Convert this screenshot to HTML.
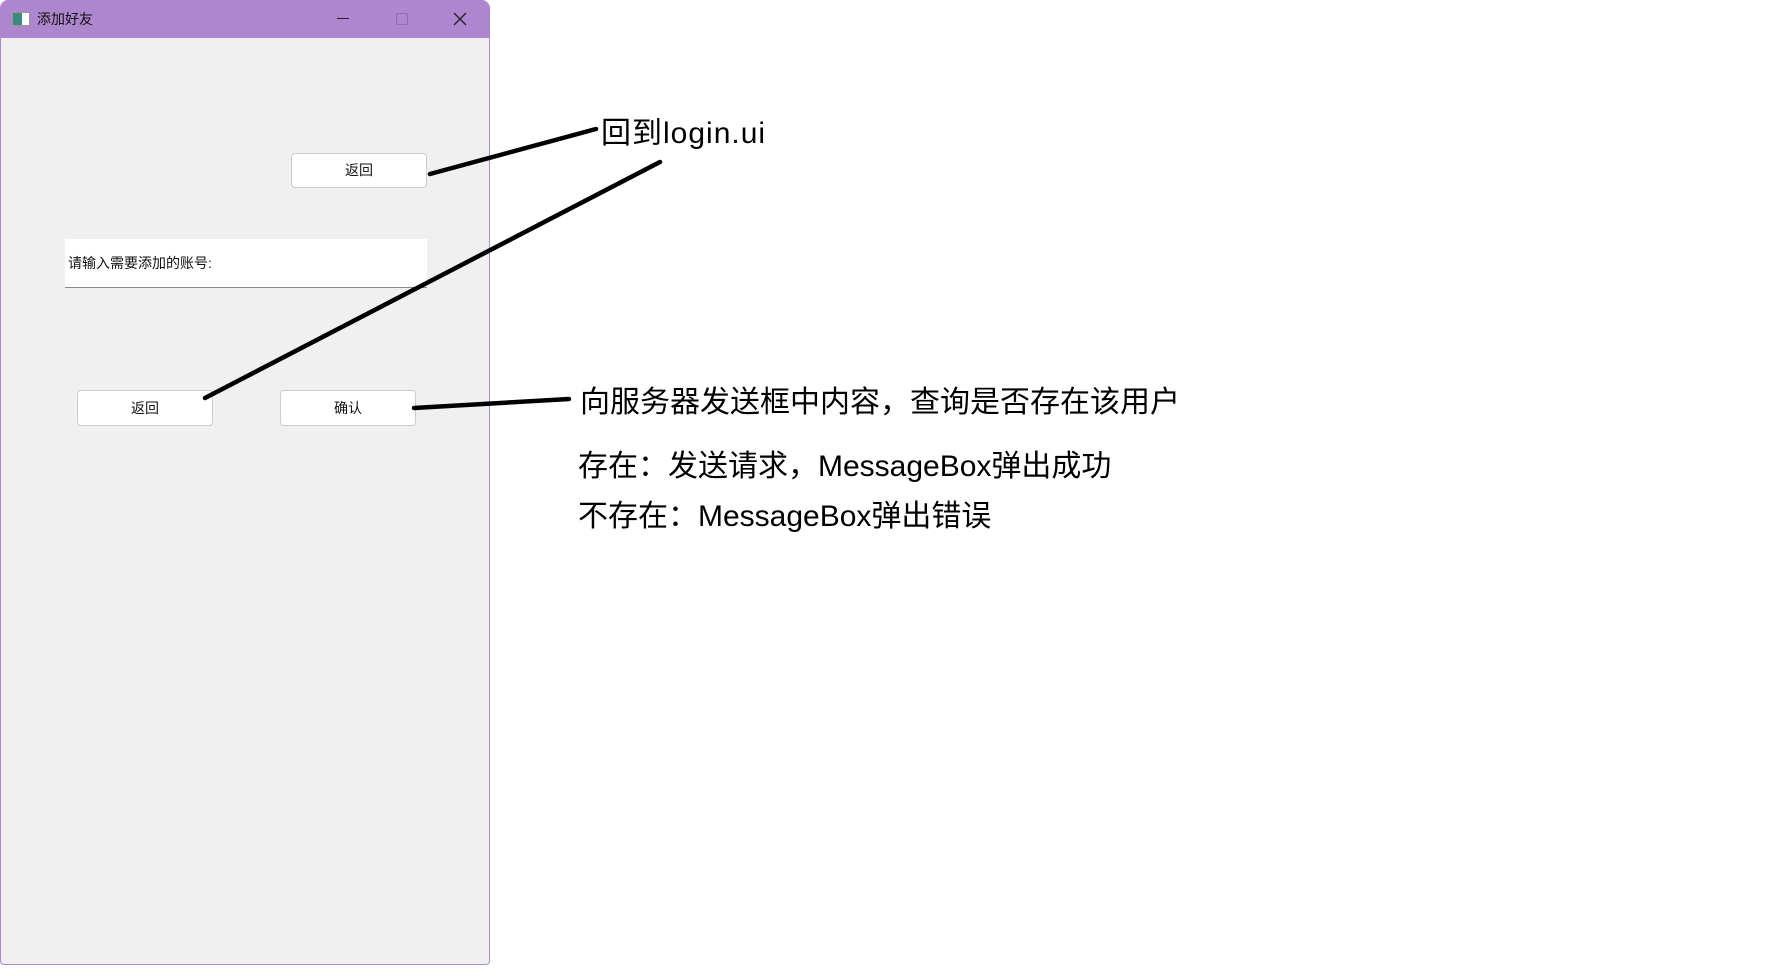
<!DOCTYPE html>
<html><head><meta charset="utf-8"><style>
body{margin:0;width:1775px;height:977px;background:#fff;position:relative;overflow:hidden;font-family:"Liberation Sans","Noto Sans CJK SC",sans-serif}
.win{position:absolute;left:0;top:0;width:490px;height:965px;background:#f0f0f0;border:1px solid #b08ad0;border-top:none;border-radius:8px 8px 4px 4px;box-sizing:border-box;overflow:hidden}
.tb{position:absolute;left:0;top:0;width:100%;height:38px;background:#ae86cf}
.tt{position:absolute;left:36px;top:9px;font-size:14px;color:#111}
.btn{position:absolute;background:#fff;border:1px solid #ccc;border-radius:4px;box-sizing:border-box;font-size:14px;text-align:center;color:#111}
.ann{position:absolute;font-size:30px;color:#000;white-space:nowrap}
</style></head><body>
<div class="win">
<div class="tb">
<div style="position:absolute;left:11px;top:12px;width:16px;height:12px;border:1px solid #999;background:linear-gradient(90deg,#3a8a80 0 55%,#fff 55%)"></div>
<div class="tt">添加好友</div>
<div style="position:absolute;left:336px;top:18px;width:12px;height:1px;background:#222"></div>
<div style="position:absolute;left:395px;top:13px;width:10px;height:10px;border:1px solid #8f6eb0;border-radius:2px"></div>
<svg style="position:absolute;left:452px;top:12px" width="14" height="14"><path d="M1 1L13 13M13 1L1 13" stroke="#222" stroke-width="1.3"/></svg>
</div>
<div class="btn" style="left:290px;top:153px;width:136px;height:35px;line-height:33px">返回</div>
<div style="position:absolute;left:64px;top:239px;width:362px;height:49px;background:#fff;border-bottom:1px solid #888;box-sizing:border-box;font-size:14px;line-height:48px;padding-left:3px;color:#111">请输入需要添加的账号:</div>
<div class="btn" style="left:76px;top:390px;width:136px;height:36px;line-height:34px">返回</div>
<div class="btn" style="left:279px;top:390px;width:136px;height:36px;line-height:34px">确认</div>
</div>
<svg style="position:absolute;left:0;top:0" width="1775" height="977">
<g stroke="#000" stroke-width="4.5" stroke-linecap="round">
<path d="M430 174L596 129"/><path d="M660 162L205 398"/><path d="M414 408L569 399"/>
</g></svg>
<div class="ann" style="left:601px;top:108px;letter-spacing:1px">回到login.ui</div>
<div class="ann" style="left:580px;top:377px">向服务器发送框中内容，查询是否存在该用户</div>
<div class="ann" style="left:578px;top:441px">存在：发送请求，MessageBox弹出成功</div>
<div class="ann" style="left:578px;top:491px">不存在：MessageBox弹出错误</div>
</body></html>
